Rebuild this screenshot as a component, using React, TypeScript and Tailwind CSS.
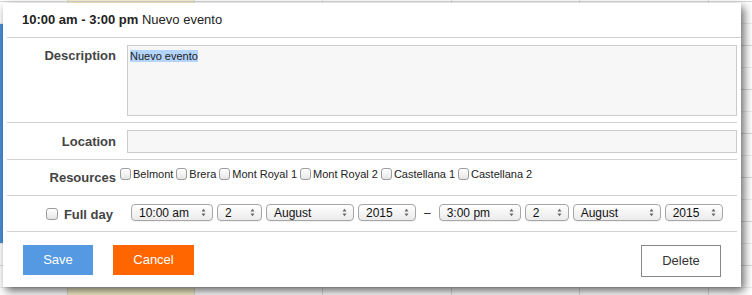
import React from "react"

const font = "font-['Liberation_Sans',Arial,Helvetica,sans-serif]"

const columns = [
    { w: "w-[67px]", yellow: false },
    { w: "w-[127px]", yellow: true },
    { w: "w-[128px]", yellow: false },
    { w: "w-[129px]", yellow: false },
    { w: "w-[128px]", yellow: false },
    { w: "w-[129px]", yellow: false },
    { w: "w-[44px]", yellow: false },
]

const resources = ["Belmont", "Brera", "Mont Royal 1", "Mont Royal 2", "Castellana 1", "Castellana 2"]

function Checkbox({ size }: { size: string }){
    return <span className={`inline-block ${size} shrink-0 rounded-[3px] border border-[#9c9c9c] bg-linear-to-b from-white to-[#e6e6e6]`} />
}

function Select({ value, width }: { value: string, width: string }){
    return(
        <div className={`${width} h-[17px] flex items-center justify-between rounded-[4px] border border-[#a6a6a6] bg-linear-to-b from-white to-[#ebebeb] pl-[7px] pr-[6px] text-[12px] leading-none text-[#111] shadow-[0_1px_0_rgba(0,0,0,0.05)]`}>
            <span>{value}</span>
            <svg width="5" height="9" viewBox="0 0 5 9">
                <path d="M0.5 3.5 L2.5 0.8 L4.5 3.5 Z" fill="#666" />
                <path d="M0.5 5.5 L2.5 8.2 L4.5 5.5 Z" fill="#666" />
            </svg>
        </div>
    )
}

function App(){
    return(
        <div className={`relative w-[752px] h-[295px] overflow-hidden bg-white ${font}`}>
            {/* calendar behind the dialog */}
            <div className="flex h-full">
                {columns.map((col, i) => (
                    <div key={i} className={`${col.w} relative h-full pt-px ${i > 0 ? "border-l border-[#dcdcdc]" : ""} ${col.yellow ? "bg-[#f7f2c9]" : ""}`}>
                        {Array.from({ length: 14 }).map((_, r) => (
                            <div key={r} className={`h-[22px] border-t ${r % 2 === 0 ? "border-[#d8d8d8]" : "border-[#ececec]"}`} />
                        ))}
                        {i === 0 && <div className="absolute left-0 top-[24px] w-[3px] h-[219px] bg-[#4a8fd8]" />}
                    </div>
                ))}
            </div>

            {/* event dialog */}
            <div className="absolute left-[3px] top-[3px] w-[738px] h-[284px] bg-white shadow-[3px_4px_9px_rgba(0,0,0,0.6)] text-[#444]">
                <div className="ml-[4px] h-[35px] border-b border-[#d2d2d2] flex items-center pl-[15px] text-[13px] text-[#222]">
                    <span className="font-bold">10:00 am - 3:00 pm</span>
                    <span>&nbsp;Nuevo evento</span>
                </div>

                <div className="px-[4px]">
                    <div className="flex pt-[7px] pb-[6px] border-b border-[#d2d2d2]">
                        <div className="w-[109px] shrink-0 text-right text-[13px] leading-[15px] font-bold mt-[3px]">Description</div>
                        <div className="ml-[11px] flex-1 h-[71px] border border-[#cccccc] bg-[#f7f7f7] pl-[2px] pt-[2px] text-[11px] leading-[16px] text-[#222]">
                            <span className="bg-[#b3d4fc]">Nuevo evento</span>
                        </div>
                    </div>

                    <div className="flex items-center pt-[7px] pb-[6px] border-b border-[#d2d2d2]">
                        <div className="w-[109px] shrink-0 text-right text-[13px] leading-[15px] font-bold">Location</div>
                        <div className="ml-[11px] flex-1 h-[23px] border border-[#cccccc] bg-[#f7f7f7]" />
                    </div>

                    <div className="flex h-[36px] border-b border-[#d2d2d2]">
                        <div className="w-[109px] shrink-0 text-right text-[13px] leading-[15px] font-bold mt-[10px]">Resources</div>
                        <div className="ml-[4px] mt-[8px] flex items-center h-[12px] text-[11px] text-[#222]">
                            {resources.map(name => (
                                <div key={name} className="flex items-center mr-[3px]">
                                    <Checkbox size="w-[11px] h-[12px]" />
                                    <span className="ml-[2px] leading-none">{name}</span>
                                </div>
                            ))}
                        </div>
                    </div>

                    <div className="flex items-center h-[36px] border-b border-[#d2d2d2]">
                        <div className="w-[109px] shrink-0 flex items-center justify-end pr-[3px] text-[13px] font-bold">
                            <Checkbox size="w-[12px] h-[12px]" />
                            <span className="ml-[6px] leading-[15px] mt-[2px]">Full day</span>
                        </div>
                        <div className="ml-[15px] flex items-center gap-[4px] -mt-[2px]">
                            <Select value="10:00 am" width="w-[82px]" />
                            <Select value="2" width="w-[45px]" />
                            <Select value="August" width="w-[88px]" />
                            <Select value="2015" width="w-[58px]" />
                            <span className="mx-[4px] text-[12px] text-[#222]">–</span>
                            <Select value="3:00 pm" width="w-[82px]" />
                            <Select value="2" width="w-[44px]" />
                            <Select value="August" width="w-[88px]" />
                            <Select value="2015" width="w-[58px]" />
                        </div>
                    </div>
                </div>

                <div className="flex items-start px-[20px] pt-[13px]">
                    <button className="w-[70px] h-[30px] bg-[#5599e2] text-white text-[13px]">Save</button>
                    <button className="ml-[20px] w-[81px] h-[30px] bg-[#ff6600] text-white text-[13px]">Cancel</button>
                    <button className="ml-auto w-[80px] h-[32px] border border-[#888] bg-white text-[#333] text-[13px]">Delete</button>
                </div>
            </div>
        </div>
    )
}

export default App
